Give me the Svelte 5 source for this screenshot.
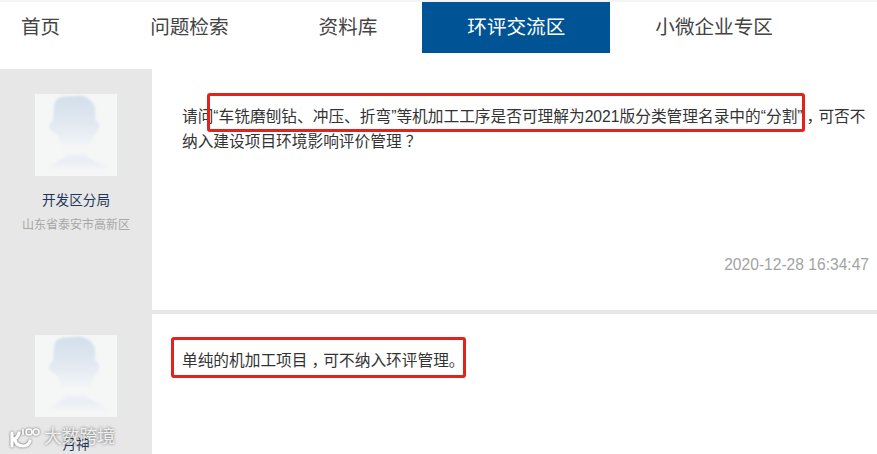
<script>
  const nav = [
    { label: '首页', active: false },
    { label: '问题检索', active: false },
    { label: '资料库', active: false },
    { label: '环评交流区', active: true },
    { label: '小微企业专区', active: false }
  ];
</script>

{#snippet avatar(id)}
  <svg class="avatar" viewBox="0 0 82 82" aria-hidden="true">
    <defs>
      <linearGradient id={"h" + id} x1="0" y1="0" x2="0" y2="1">
        <stop offset="0" stop-color="#d4dfeb" />
        <stop offset="0.5" stop-color="#e2e9f2" />
        <stop offset="0.9" stop-color="#f5f6f8" />
      </linearGradient>
      <linearGradient id={"b" + id} x1="0" y1="0" x2="0" y2="1">
        <stop offset="0" stop-color="#f5f6f8" />
        <stop offset="0.5" stop-color="#e8edf5" />
        <stop offset="1" stop-color="#f5f6f6" />
      </linearGradient>
      <filter id={"s" + id} x="-10%" y="-10%" width="120%" height="120%">
        <feGaussianBlur stdDeviation="0.9" />
      </filter>
    </defs>
    <rect width="82" height="82" fill="#f5f6f6" />
    <g filter={"url(#s" + id + ")"}>
      <path d="M21 6 C26 1 34 3 40 2 C46 1 52 3 55 6 C59 9 61 14 60 22 C60 25 60 26 61 27 C65 28 65 34 62 38 C60 40 59 42 58 44 C56 51 50 59 42 60 C33 60 27 52 24 44 C23 41 21 40 18 38 C13 35 13 29 18 27 C19 20 18 11 21 6 Z" fill={"url(#h" + id + ")"} />
      <path d="M30 57 C36 61 46 61 52 57 L53 63 C59 67 68 70 76 76 L10 76 C17 70 25 67 30 63 Z" fill={"url(#b" + id + ")"} />
    </g>
  </svg>
{/snippet}

<div class="page">
  <nav class="nav">
    {#each nav as item}
      <a class="item" class:active={item.active} href="#top">{item.label}</a>
    {/each}
  </nav>

  <section class="row first">
    <aside class="side">
      {@render avatar('a')}
      <div class="name">开发区分局</div>
      <div class="place">山东省泰安市高新区</div>
    </aside>
    <div class="main">
      <p class="text"><span>请问“车铣磨刨钻、冲压、折弯”等机加工工序是否可理解为2021版分类管理名录中的“分割”</span><span class="punct">，</span><span>可否不</span><span>纳入建设项目环境影响评价管理</span><span class="ask">？</span></p>
      <div class="time">2020-12-28 16:34:47</div>
      <div class="mark mark-q"></div>
    </div>
  </section>

  <section class="row second">
    <aside class="side">
      {@render avatar('b')}
      <div class="name name2">月神</div>
    </aside>
    <div class="main">
      <p class="text answer"><span>单纯的机加工项目</span><span class="punct">，</span><span>可不纳入环评管理。</span></p>
      <div class="mark mark-a"></div>
    </div>
  </section>

  <div class="wm">
    <svg class="wmlogo" viewBox="0 0 34 24" aria-hidden="true">
      <path d="M4 8v13M4 15c4-1 6-3 7-7M7 15c1 4 4 6 8 6 4 0 6-2 7-5" fill="none" stroke="#fff" stroke-width="3.2" stroke-linecap="round" />
      <path d="M15 4v6" fill="none" stroke="#fff" stroke-width="1.6" />
      <circle cx="21" cy="7" r="3" fill="none" stroke="#fff" stroke-width="1.6" />
      <circle cx="28" cy="7" r="3" fill="none" stroke="#fff" stroke-width="1.6" />
    </svg>
    <span>大数跨境</span>
  </div>
</div>

<style>
  :global(body) {
    margin: 0;
    background: #fff;
  }
  .page {
    position: relative;
    width: 877px;
    height: 454px;
    overflow: hidden;
    font-family: "Liberation Sans", "Noto Sans CJK SC", sans-serif;
    background: #fff;
    border-top: 2px solid #f4f4f4;
    box-sizing: border-box;
  }
  .nav {
    display: flex;
    height: 67px;
    align-items: flex-start;
  }
  .item {
    display: block;
    height: 51px;
    line-height: 51px;
    padding: 0 45px;
    font-size: 19.6px;
    color: #444;
    text-decoration: none;
    flex: none;
  }
  .item:first-child {
    padding-left: 21px;
  }
  .active {
    background: #005495;
    color: #fff;
  }
  .row {
    display: flex;
  }
  .first {
    height: 245px;
  }
  .first .main {
    border-bottom: 4px solid #e8e8e8;
  }
  .second {
    height: 141px;
  }
  .side {
    width: 152px;
    flex: none;
    background: #e7e7e7;
    display: flex;
    flex-direction: column;
    align-items: center;
    padding-top: 25px;
    box-sizing: border-box;
  }
  .second .side {
    padding-top: 21px;
  }
  .avatar {
    width: 82px;
    height: 82px;
    display: block;
    flex: none;
  }
  .name {
    margin-top: 15px;
    font-size: 13.6px;
    line-height: 19px;
    color: #1d3557;
  }
  .name2 {
    margin-top: 18px;
  }
  .place {
    margin-top: 6px;
    font-size: 12px;
    line-height: 18px;
    color: #a8a8a8;
  }
  .main {
    position: relative;
    flex: 1;
    min-width: 0;
    box-sizing: border-box;
  }
  .text {
    margin: 0;
    position: absolute;
    left: 30px;
    top: 35px;
    width: 690px;
    font-size: 15.7px;
    line-height: 25px;
    color: #333;
  }
  .answer {
    top: 34px;
  }
  .punct {
    font-feature-settings: "halt";
    padding: 0 4px;
  }
  .ask {
    padding-left: 4px;
  }
  .time {
    position: absolute;
    right: 8px;
    top: 187px;
    font-size: 15.6px;
    line-height: 18px;
    color: #a3a3a3;
  }
  .mark {
    position: absolute;
    border: 3px solid #e3231b;
    border-radius: 3px;
    box-sizing: border-box;
  }
  .mark-q {
    left: 55px;
    top: 24px;
    width: 598px;
    height: 39px;
  }
  .mark-a {
    left: 19px;
    top: 23px;
    width: 295px;
    height: 41px;
  }
  .wm {
    position: absolute;
    left: 8px;
    top: 423px;
    display: flex;
    align-items: center;
    gap: 2px;
    color: rgba(255, 255, 255, 0.85);
    font-size: 17.8px;
    line-height: 24px;
    text-shadow: 0 0 3px rgba(80, 80, 80, 0.9);
  }
  .wmlogo {
    width: 34px;
    height: 24px;
    filter: drop-shadow(0 0 1px rgba(80, 80, 80, 0.9));
  }
</style>
